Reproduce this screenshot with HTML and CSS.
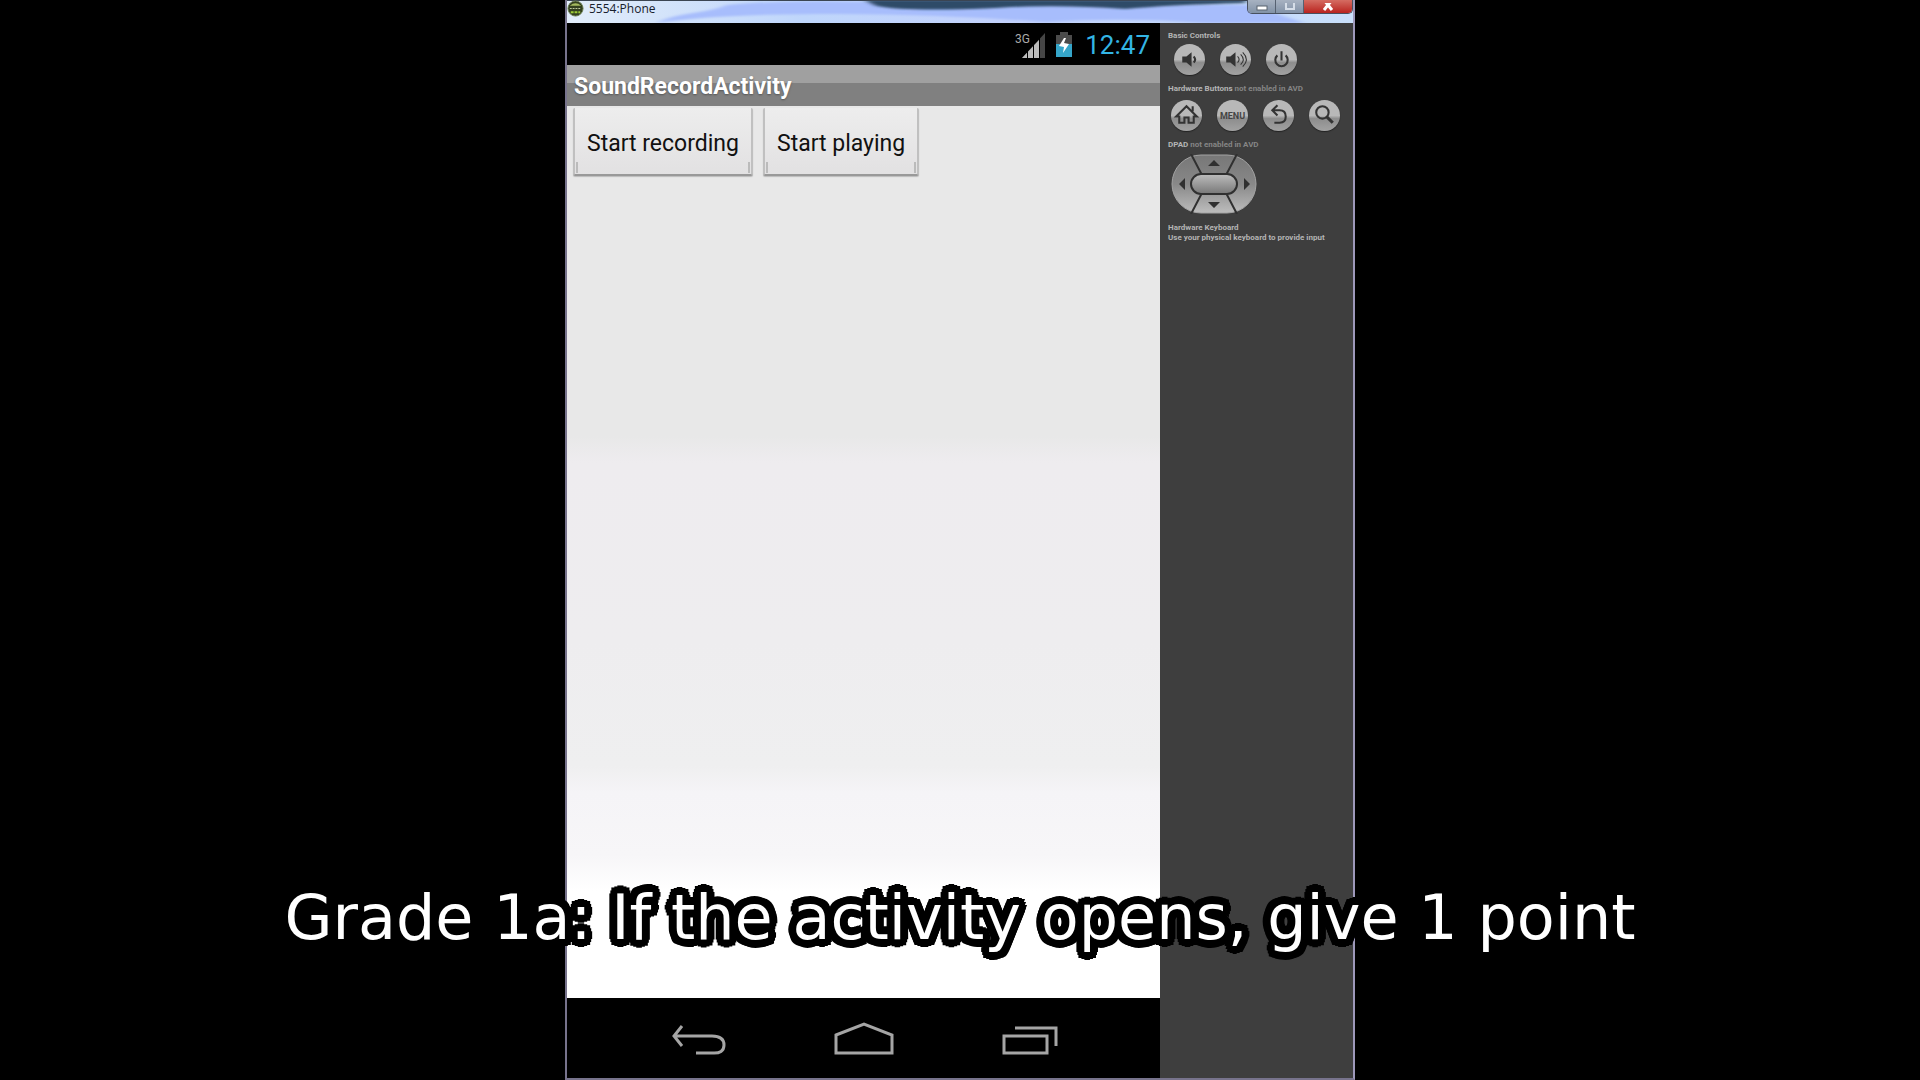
FILE: index.html
```html
<!DOCTYPE html>
<html lang="en">
<head>
<meta charset="utf-8">
<meta name="viewport" content="width=device-width, initial-scale=1">
<title>5554:Phone</title>
<link rel="stylesheet" href="styles.css">
</head>
<body>
<main class="window">
  <header class="titlebar">
    <svg class="glass" viewBox="0 0 788 23" preserveAspectRatio="none" aria-hidden="true">
      <defs>
        <linearGradient id="glassFill" x1="0" x2="1" y1="0" y2="0">
          <stop offset="0" stop-color="#e2edfa"/><stop offset=".3" stop-color="#bfd6fb"/><stop offset=".55" stop-color="#c3d2fc"/><stop offset="1" stop-color="#c9e0fb"/>
        </linearGradient>
        <filter id="soft" x="-10%" y="-50%" width="120%" height="200%"><feGaussianBlur stdDeviation="3 1"/></filter>
      </defs>
      <rect width="788" height="23" fill="url(#glassFill)"/>
      <path d="M90 23C110 12 140 14 160 5Q210 0 300 2L690 5Q715 16 740 23H640Q560 17 480 22Q360 13 250 14T90 23Z" fill="#a7bdfc" filter="url(#soft)"/>
      <path d="M298 0H680V3Q600 5 560 9Q490 4 430 8Q340 12 310 6Z" fill="#2f4c68" filter="url(#soft)"/>
      <rect width="788" height="1" fill="#3b4553"/>
    </svg>
    <svg class="app-icon" viewBox="0 0 18 18" aria-hidden="true"><circle cx="9" cy="9" r="8" fill="#33401f" stroke="#6b7d51"/><path d="M3 6Q9 1 15 6Z" fill="#a4ba5e"/><path d="M3 9h12" stroke="#c9d3a7" stroke-dasharray="2 1"/><path d="M4 13h10" stroke="#9dcc36" stroke-width="2" stroke-dasharray="3 1"/></svg>
    <h1 class="window-title">5554:Phone</h1>
    <div class="window-buttons">
      <button class="win-btn" aria-label="Minimize"><svg viewBox="0 0 12 8"><rect x="1" y="3" width="10" height="4" fill="#fff" stroke="#59636f"/></svg></button>
      <button class="win-btn" aria-label="Maximize"><svg viewBox="0 0 12 8"><path d="M2-2h8v8H2z" fill="none" stroke="#d6dee8" stroke-width="2"/></svg></button>
      <button class="win-btn close" aria-label="Close"><svg viewBox="0 0 12 8"><path d="M2-3l8 10M10-3L2 7" stroke="#fff" stroke-width="3"/></svg></button>
    </div>
  </header>
  <div class="content">
    <section class="phone">
      <div class="status">
        <svg class="signal" viewBox="0 0 31 28" aria-hidden="true"><text x="0" y="12" class="net">3G</text><path d="M7 27L30 2V27Z" fill="#454545"/><path d="M7 27L24 9V27Z" fill="#bcbcbc"/><path d="M12.500 20v8M18.500 12v16M24.500 7v21" stroke="#000" stroke-width="1"/></svg>
        <svg class="battery" viewBox="0 0 18 26" aria-hidden="true"><path d="M1 3h4V0h8v3h4v9H1z" fill="#4b4b4b"/><path d="M1 12h16v13H1z" fill="#35a5c9"/><path d="M9 6L4 14l5 1-1 6 6-9-5-1 2-5z" fill="#fff"/></svg>
        <time class="clock">12:47</time>
      </div>
      <h2 class="activity">SoundRecordActivity</h2>
      <div class="screen">
        <button class="android-btn">Start recording</button>
        <button class="android-btn">Start playing</button>
      </div>
      <nav class="navbar">
        <button class="nav-btn" aria-label="Back"><svg viewBox="0 0 60 34"><path d="M14 4L6 14l8 10M6 14h38q12 0 12 9t-12 8H28" /></svg></button>
        <button class="nav-btn" aria-label="Home"><svg viewBox="0 0 60 34"><path d="M2 13L30 2l28 11v18H2z"/></svg></button>
        <button class="nav-btn" aria-label="Recent apps"><svg viewBox="0 0 60 34"><path d="M4 14h43v17H4zM15 6h41v18"/></svg></button>
      </nav>
    </section>
    <aside class="controls">
      <h3 class="label">Basic Controls</h3>
      <div class="row basic">
        <button class="round" aria-label="Volume down"><svg viewBox="0 0 30 30"><path d="M8 12h4l5-4v14l-5-4H8z" fill="#333"/><path d="M19 12q3 3 0 6" class="line"/></svg></button>
        <button class="round" aria-label="Volume up"><svg viewBox="0 0 30 30"><path d="M6 12h4l5-4v14l-5-4H6z" fill="#333"/><path d="M17 12q3 3 0 6M20 10q5 5 0 10M22 8q7 7 0 14" class="line thin"/></svg></button>
        <button class="round" aria-label="Power"><svg viewBox="0 0 30 30"><path d="M11 11a6 6 0 1 0 8 0M15 7v9" class="line"/></svg></button>
      </div>
      <h3 class="label">Hardware Buttons <span class="off">not enabled in AVD</span></h3>
      <div class="row">
        <button class="round" aria-label="Home"><svg viewBox="0 0 30 30"><path d="M5 16L15 6l10 10h-3v6h-5v-5h-4v5H8v-6zM21 6v5" class="line"/></svg></button>
        <button class="round menu">MENU</button>
        <button class="round" aria-label="Back"><svg viewBox="0 0 30 30"><path d="M14 5L9 10l5 5M9 10h7q6 0 6 6t-6 6h-5" class="line"/></svg></button>
        <button class="round" aria-label="Search"><svg viewBox="0 0 30 30"><circle cx="13" cy="12" r="6" class="line"/><path d="M17 16l6 6" class="line thick"/></svg></button>
      </div>
      <h3 class="label">DPAD <span class="off">not enabled in AVD</span></h3>
      <svg class="dpad" viewBox="0 0 86 60" role="img" aria-label="Directional pad">
        <defs><linearGradient id="pad" x2="0" y2="1"><stop stop-color="#777"/><stop offset=".5" stop-color="#888"/><stop offset="1" stop-color="#bdbdbd"/></linearGradient><linearGradient id="key" x2="0" y2="1"><stop stop-color="#bdbdbd"/><stop offset="1" stop-color="#777"/></linearGradient></defs>
        <rect x="1" y="1" width="84" height="58" rx="29" fill="url(#pad)" stroke="#a3a3a3"/>
        <path d="M20 0L32 23M66 0L54 23M20 60L32 37M66 60L54 37" stroke="#303030" stroke-width="2"/>
        <rect x="20" y="20" width="46" height="20" rx="10" fill="url(#key)" stroke="#303030" stroke-width="2"/>
        <path d="M37 12l6-6 6 6zM37 48l6 6 6-6zM14 24v12l-6-6zM73 24v12l6-6z" fill="#303030"/>
      </svg>
      <h3 class="label">Hardware Keyboard</h3>
      <p class="label">Use your physical keyboard to provide input</p>
    </aside>
  </div>
</main>
<p class="caption">Grade 1a: If the activity opens, give 1 point</p>
</body>
</html>
```
FILE: styles.css
```css
* { box-sizing: border-box; }
body { margin: 0; background: #000; font-family: Roboto, sans-serif; }
h1, h2, h3, p { margin: 0; }
button { padding: 0; border: 0; font: inherit; }
svg { display: block; }

.window {
  position: relative;
  display: flex;
  flex-direction: column;
  width: 790px;
  max-width: 100%;
  min-height: 100vh;
  margin: 0 auto;
  border: solid #77738c;
  border-width: 0 2px 2px;
  border-right-color: #9d98ba;
}
.titlebar { position: relative; display: flex; align-items: flex-start; height: 23px; }
.glass { position: absolute; inset: 0; width: 100%; height: 100%; }
.app-icon { position: relative; width: 17px; height: 17px; }
.window-title {
  position: relative;
  margin-left: 5px;
  font: 12px/17px "Open Sans", sans-serif;
  color: #17202c;
}
.window-buttons {
  position: relative;
  display: flex;
  margin-left: auto;
  height: 14px;
  border: 1px solid #47505f;
  border-top: 0;
  border-radius: 0 0 5px 5px;
  overflow: hidden;
}
.win-btn {
  display: grid;
  place-items: center;
  width: 28px;
  background: linear-gradient(#a7b2c1, #8292a7);
  border-right: 1px solid #566171;
}
.win-btn svg { width: 12px; height: 8px; }
.win-btn.close { width: 48px; border: 0; background: linear-gradient(#d56c62, #b9241f); }

.content { display: flex; flex: 1; }
.phone { display: flex; flex: 1; flex-direction: column; }
.status {
  display: flex;
  align-items: center;
  justify-content: flex-end;
  height: 42px;
  padding: 2px 10px 0 0;
  background: #000;
}
.signal { width: 31px; height: 28px; }
.net { font: 12px Roboto, sans-serif; fill: #aaa; }
.battery { width: 18px; height: 26px; margin: 0 12px 0 9px; }
.clock { font-size: 26px; color: #33b5e5; }
.activity {
  padding: 2px 0 0 7px;
  font-size: 23px;
  font-weight: 700;
  line-height: 39px;
  color: #fff;
  background: linear-gradient(#a0a0a0 0 18px, #808080 18px);
  text-shadow: 0 1px 2px #555;
}
.screen {
  display: flex;
  flex: 1;
  align-items: flex-start;
  gap: 10px;
  padding: 2px 6px;
  background: linear-gradient(#e8e8e8 0, #e8e8e8 37%, #eeecef 40%, #eeedef 60%, #efeff0 74%, #f5f4f7 77%, #f7f6f8 84%, #fff 88%);
}
.android-btn {
  height: 68px;
  padding: 4px 12px 0 12px;
  font-size: 23px;
  color: #111;
  background:
    linear-gradient(#bbb, #bbb) 1px 54px / 2px 11px no-repeat,
    linear-gradient(#bbb, #bbb) right 1px top 54px / 2px 11px no-repeat,
    linear-gradient(#ededed, #e2e1e2);
  border: solid #c0c0c0;
  border-width: 0 2px 2px;
  border-bottom-color: #999;
  border-radius: 2px;
  box-shadow: 0 1px 1px #bbb;
}
.navbar {
  display: flex;
  align-items: center;
  justify-content: center;
  gap: 106px;
  height: 80px;
  padding-top: 2px;
  background: #000;
}
.nav-btn { background: none; }
.nav-btn svg { width: 60px; height: 34px; fill: none; stroke: #a5a5a5; stroke-width: 3; }

.controls { width: 193px; padding: 8px 0 0 8px; background: #3e3e3e; }
.label { font-size: 8px; font-weight: 700; line-height: 10px; white-space: nowrap; color: #b4b4b4; }
.off { color: #858585; }
.row { display: flex; gap: 15px; margin: 6px 0 9px 3px; }
.basic { margin: 3px 0 9px 6px; }
.round {
  width: 31px;
  height: 31px;
  border-radius: 50%;
  background: linear-gradient(#b8b8b8 0 50%, #8d8d8d 60%, #a2a2a2);
  box-shadow: 0 1px 1px #222;
}
.round svg { width: 31px; height: 31px; }
.line { fill: none; stroke: #333; stroke-width: 2; }
.thick { stroke-width: 3; }
.thin { stroke-width: 1; }
.menu { font-size: 9px; font-weight: 700; color: #444; }
.dpad { width: 86px; height: 60px; margin: 4px 0 9px 3px; }

.caption {
  position: absolute;
  left: 0;
  right: 0;
  bottom: 120px;
  font: 62px/84px "DejaVu Sans", sans-serif;
  text-align: center;
  color: #fff;
  /* rounded outline: an outer and an inner ring of copies */
  text-shadow:
    8px 0 #000, 7px 3px #000, 6px 6px #000, 3px 7px #000,
    0 8px #000, -3px 7px #000, -6px 6px #000, -7px 3px #000,
    -8px 0 #000, -7px -3px #000, -6px -6px #000, -3px -7px #000,
    0 -8px #000, 3px -7px #000, 6px -6px #000, 7px -3px #000,
    4px 0 #000, 3px 3px #000, 0 4px #000, -3px 3px #000,
    -4px 0 #000, -3px -3px #000, 0 -4px #000, 3px -3px #000;
}
```
